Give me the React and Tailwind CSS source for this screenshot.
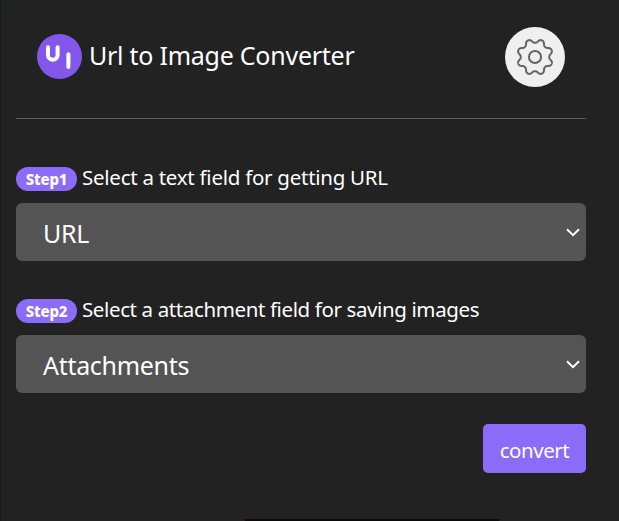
import React from "react";

function Gear() {
  const points = [];
  for (let i = 0; i < 384; i++) {
    const a = (i / 384) * Math.PI * 2;
    const r = 16.1 - 2 * Math.cos(8 * a) + 0.16 * Math.cos(24 * a);
    points.push(`${(22 + r * Math.sin(a)).toFixed(2)} ${(22 - r * Math.cos(a)).toFixed(2)}`);
  }
  return (
    <svg className="h-11 w-11" viewBox="0 0 44 44" fill="none" stroke="#646464" strokeWidth="2" strokeLinejoin="round">
      <path d={`M${points.join("L")}Z`} />
      <circle cx="22" cy="22" r="6.1" />
    </svg>
  );
}

function Logo() {
  return (
    <svg className="h-[45px] w-[45px] shrink-0" viewBox="0 0 45 45" fill="none">
      <circle cx="22.5" cy="22.5" r="22.5" fill="#8457ec" />
      <g stroke="#fff" strokeWidth="4" strokeLinecap="round">
        <path d="M11 13.3v7.7a4.8 4.8 0 0 0 9.6 0v-7.7" />
        <path d="M31.4 20.2v12.8" />
      </g>
    </svg>
  );
}

function Field({ step, label, labelClass, value, valueClass }) {
  return (
    <section className="h-[132px]">
      <div className="flex h-[38px] items-start">
        <span className="mt-[2px] flex h-6 w-[61px] items-center justify-center rounded-full bg-[#8b6cf9] pt-px text-[15px] font-extrabold tracking-[-0.15px]">{step}</span>
        <span className={`-mt-px ml-[5px] whitespace-nowrap text-[20.5px] leading-[26px] ${labelClass}`}>{label}</span>
      </div>
      <button className="flex h-[58px] w-full items-center justify-between rounded-[6px] bg-[#545454] pl-[27px] pr-[6px]">
        <span className={`text-[25px] leading-8 ${valueClass}`}>{value}</span>
        <svg className="h-[9px] w-[14px]" viewBox="0 0 14 9" fill="none" stroke="#fff" strokeWidth="2">
          <path d="M1 1.2l6 6 6-6" />
        </svg>
      </button>
    </section>
  );
}

export default function App() {
  return (
    <main className="flex h-[521px] w-[619px] flex-col overflow-hidden border-l border-t border-l-[#191a1c] border-t-[#1d2230] bg-[#222] pl-[15px] pr-[33px] font-['Noto_Sans',sans-serif] text-white">
      <header className="flex h-[118px] shrink-0 items-start border-b border-[#5b5b5b] pl-[21px] pr-[21px] pt-[26px]">
        <div className="mt-[7px] flex items-center">
          <Logo />
          <h1 className="ml-[7px] whitespace-nowrap pb-[4px] text-[25px] leading-[40px] tracking-[-0.25px]">Url to Image Converter</h1>
        </div>
        <button className="ml-auto flex h-[60px] w-[60px] items-center justify-center rounded-full bg-[#efefef]">
          <Gear />
        </button>
      </header>
      <div className="pt-[46px]">
        <Field step="Step1" label="Select a text field for getting URL" labelClass="tracking-[-0.26px]" value="URL" valueClass="pt-[2px] tracking-[-0.3px]" />
        <Field step="Step2" label="Select a attachment field for saving images" labelClass="tracking-[-0.38px]" value="Attachments" valueClass="pt-px tracking-[-0.3px]" />
      </div>
      <button className="-mt-[5px] ml-auto h-[49px] w-[103px] shrink-0 rounded-[5px] bg-[#8b6cf9] pt-[3px] text-[20.5px] tracking-[-0.45px]">convert</button>
      <div className="ml-[229px] mt-auto h-[2px] w-[254px] shrink-0 bg-[#0b0909]" />
    </main>
  );
}
